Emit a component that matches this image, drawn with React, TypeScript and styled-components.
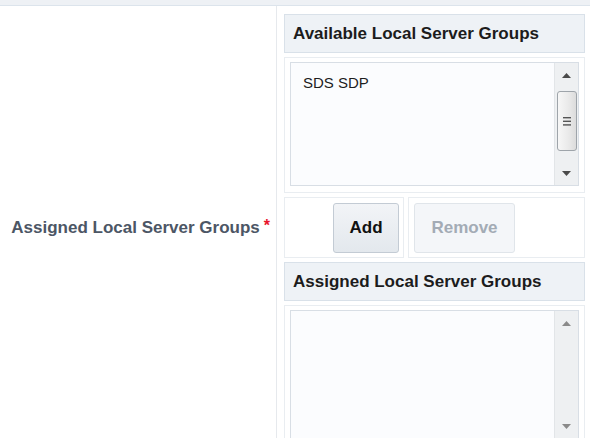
import styled, { createGlobalStyle } from 'styled-components';

const GlobalStyle = createGlobalStyle`
  html, body {
    margin: 0;
    padding: 0;
    background: #ffffff;
    overflow: hidden;
  }
  body {
    font-family: "Liberation Sans", Arial, sans-serif;
  }
`;

const Page = styled.div`
  width: 590px;
  height: 438px;
  overflow: hidden;
  display: flex;
  flex-direction: column;
`;

const TopBand = styled.div`
  height: 5px;
  flex: none;
  background: #eef1f5;
  border-bottom: 1px solid #dce4ec;
`;

const FormRow = styled.div`
  display: grid;
  grid-template-columns: 277px 1fr;
  flex: none;
`;

const LabelCell = styled.div`
  display: flex;
  align-items: center;
  justify-content: flex-end;
  padding-right: 6px;
  padding-bottom: 3px;
  border-right: 1px solid #e6e9ed;
  font-size: 17px;
  font-weight: bold;
  color: #4c5665;
`;

const Required = styled.span`
  color: #e8142a;
  margin-left: 4px;
  font-size: 16px;
  position: relative;
  top: -2px;
`;

const Shuttle = styled.div`
  display: flex;
  flex-direction: column;
  gap: 4px;
  padding: 8px 5px 6px 7px;
`;

const Header = styled.div`
  box-sizing: border-box;
  height: 39px;
  display: flex;
  align-items: center;
  padding-left: 8px;
  background: #eef2f6;
  border: 1px solid #d9e1e9;
  font-size: 17px;
  font-weight: bold;
  color: #1c1c1c;
`;

const ListPanel = styled.div`
  border: 1px solid #e9edf1;
  padding: 4px 5px 6px 5px;
`;

const ListBox = styled.div<{ $height: number }>`
  box-sizing: border-box;
  height: ${(p) => p.$height}px;
  display: flex;
  background: #fbfcfe;
  border: 1px solid #d8dee5;
`;

const Options = styled.div`
  flex: 1;
  padding: 11px 12px;
  font-size: 15px;
  color: #1d1d1d;
`;

const Scrollbar = styled.div`
  width: 23px;
  flex: none;
  display: flex;
  flex-direction: column;
  align-items: center;
  background: #eef0f2;
  border-left: 1px solid #e2e5e8;
`;

const ArrowButton = styled.div`
  height: 24px;
  flex: none;
  display: flex;
  align-items: center;
  justify-content: center;
`;

const Track = styled.div`
  flex: 1;
  width: 100%;
  display: flex;
  justify-content: center;
  padding-top: 4px;
  box-sizing: border-box;
`;

const Thumb = styled.div`
  box-sizing: border-box;
  width: 20px;
  height: 60px;
  border: 1px solid #9ea4aa;
  border-radius: 3px;
  background: linear-gradient(to right, #f7f7f7, #e9e9e9 60%, #dcdcdc);
  display: flex;
  align-items: center;
  justify-content: center;
`;

const ButtonRow = styled.div`
  display: grid;
  grid-template-columns: 120px 1fr;
  gap: 4px;
  height: 61px;
`;

const ButtonCell = styled.div<{ $align: 'start' | 'end' }>`
  box-sizing: border-box;
  border: 1px solid #e9edf1;
  display: flex;
  align-items: flex-start;
  justify-content: ${(p) => (p.$align === 'end' ? 'flex-end' : 'flex-start')};
  padding: 5px 4px 0 5px;
`;

const ActionButton = styled.button<{ $width: number }>`
  box-sizing: border-box;
  width: ${(p) => p.$width}px;
  height: 50px;
  border-radius: 3px;
  font-family: "Liberation Sans", Arial, sans-serif;
  font-size: 17px;
  font-weight: bold;
  cursor: pointer;
  color: #111;
  background: linear-gradient(to bottom, #f2f4f7, #e3e8ed);
  border: 1px solid #c3cbd4;
  &:disabled {
    cursor: default;
    color: #a3abb5;
    background: #f4f6f9;
    border-color: #e0e5ea;
  }
`;

function Arrow({ down, color }: { down?: boolean; color: string }) {
  return (
    <svg width="9" height="5" viewBox="0 0 9 5">
      <polygon points={down ? '0,0 9,0 4.5,5' : '0,5 9,5 4.5,0'} fill={color} />
    </svg>
  );
}

function Grip() {
  return (
    <svg width="8" height="9" viewBox="0 0 8 9">
      <rect x="0" y="0" width="8" height="1.4" fill="#555" />
      <rect x="0" y="3.6" width="8" height="1.4" fill="#555" />
      <rect x="0" y="7.2" width="8" height="1.4" fill="#555" />
    </svg>
  );
}

function ShuttleList({
  items,
  scrollable,
  height,
}: {
  items: string[];
  scrollable: boolean;
  height: number;
}) {
  const arrowColor = scrollable ? '#4a4a4a' : '#8a8a8a';
  return (
    <ListPanel>
      <ListBox $height={height}>
        <Options>
          {items.map((it) => (
            <div key={it}>{it}</div>
          ))}
        </Options>
        <Scrollbar>
          <ArrowButton>
            <Arrow color={arrowColor} />
          </ArrowButton>
          <Track>
            {scrollable ? (
              <Thumb>
                <Grip />
              </Thumb>
            ) : null}
          </Track>
          <ArrowButton>
            <Arrow down color={arrowColor} />
          </ArrowButton>
        </Scrollbar>
      </ListBox>
    </ListPanel>
  );
}

export default function App() {
  return (
    <Page>
      <GlobalStyle />
      <TopBand />
      <FormRow>
        <LabelCell>
          Assigned Local Server Groups
          <Required>*</Required>
        </LabelCell>
        <Shuttle>
          <Header>Available Local Server Groups</Header>
          <ShuttleList items={['SDS SDP']} scrollable height={124} />
          <ButtonRow>
            <ButtonCell $align="end">
              <ActionButton $width={66}>Add</ActionButton>
            </ButtonCell>
            <ButtonCell $align="start">
              <ActionButton $width={101} disabled>
                Remove
              </ActionButton>
            </ButtonCell>
          </ButtonRow>
          <Header>Assigned Local Server Groups</Header>
          <ShuttleList items={[]} scrollable={false} height={129} />
        </Shuttle>
      </FormRow>
    </Page>
  );
}
